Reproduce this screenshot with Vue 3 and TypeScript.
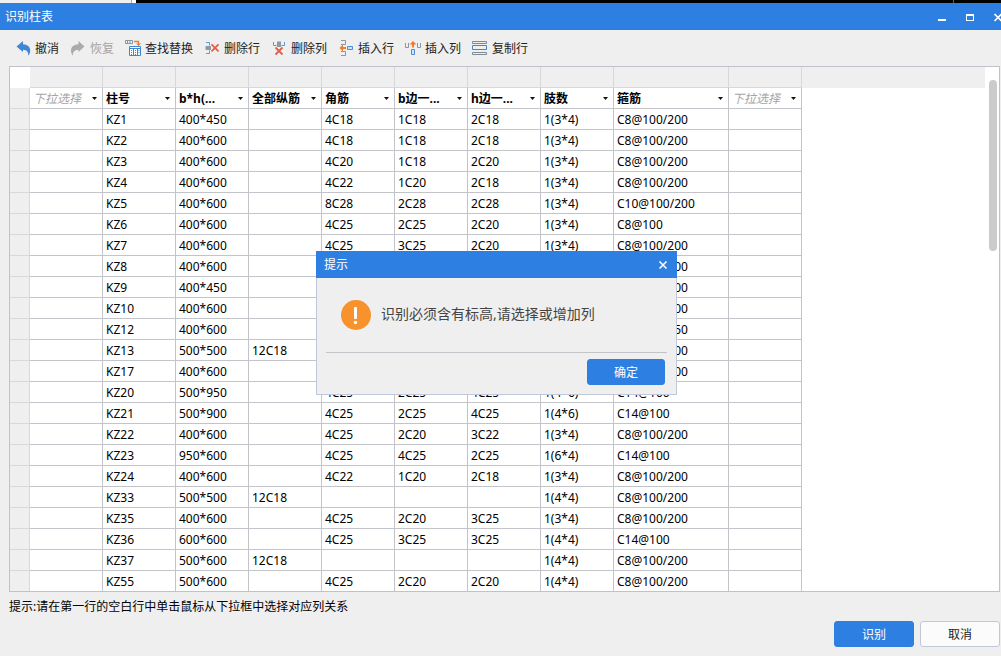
<script setup lang="ts">
import { reactive, ref } from 'vue'

interface Column {
  label: string
  width: number
  empty?: boolean
}

const columns: Column[] = [
  { label: '下拉选择', width: 73, empty: true },
  { label: '柱号', width: 73 },
  { label: 'b*h(...', width: 73 },
  { label: '全部纵筋', width: 73 },
  { label: '角筋', width: 73 },
  { label: 'b边一...', width: 73 },
  { label: 'h边一...', width: 73 },
  { label: '肢数', width: 73 },
  { label: '箍筋', width: 115 },
  { label: '下拉选择', width: 73, empty: true },
]
const mapping = reactive(columns.map((c) => c.label))

// Columns: number, section, all bars, corner bars, b side, h side, legs, stirrups
const rows: string[][] = [
  ['KZ1', '400*450', '', '4C18', '1C18', '2C18', '1(3*4)', 'C8@100/200'],
  ['KZ2', '400*600', '', '4C18', '1C18', '2C18', '1(3*4)', 'C8@100/200'],
  ['KZ3', '400*600', '', '4C20', '1C18', '2C20', '1(3*4)', 'C8@100/200'],
  ['KZ4', '400*600', '', '4C22', '1C20', '2C18', '1(3*4)', 'C8@100/200'],
  ['KZ5', '400*600', '', '8C28', '2C28', '2C28', '1(3*4)', 'C10@100/200'],
  ['KZ6', '400*600', '', '4C25', '2C25', '2C20', '1(3*4)', 'C8@100'],
  ['KZ7', '400*600', '', '4C25', '3C25', '2C20', '1(3*4)', 'C8@100/200'],
  ['KZ8', '400*600', '', '4C25', '2C25', '2C20', '1(3*4)', 'C8@100/200'],
  ['KZ9', '400*450', '', '4C18', '1C18', '2C18', '1(3*4)', 'C8@100/200'],
  ['KZ10', '400*600', '', '4C20', '1C18', '2C20', '1(3*4)', 'C8@100/200'],
  ['KZ12', '400*600', '', '4C22', '1C20', '2C18', '1(3*4)', 'C8@100/150'],
  ['KZ13', '500*500', '12C18', '', '', '', '1(4*4)', 'C8@100/200'],
  ['KZ17', '400*600', '', '4C25', '2C20', '2C20', '1(3*4)', 'C8@100/200'],
  ['KZ20', '500*950', '', '4C25', '2C25', '4C25', '1(4*6)', 'C14@100'],
  ['KZ21', '500*900', '', '4C25', '2C25', '4C25', '1(4*6)', 'C14@100'],
  ['KZ22', '400*600', '', '4C25', '2C20', '3C22', '1(3*4)', 'C8@100/200'],
  ['KZ23', '950*600', '', '4C25', '4C25', '2C25', '1(6*4)', 'C14@100'],
  ['KZ24', '400*600', '', '4C22', '1C20', '2C18', '1(3*4)', 'C8@100/200'],
  ['KZ33', '500*500', '12C18', '', '', '', '1(4*4)', 'C8@100/200'],
  ['KZ35', '400*600', '', '4C25', '2C20', '3C25', '1(3*4)', 'C8@100/200'],
  ['KZ36', '600*600', '', '4C25', '3C25', '3C25', '1(4*4)', 'C14@100'],
  ['KZ37', '500*600', '12C18', '', '', '', '1(4*4)', 'C8@100/200'],
  ['KZ55', '500*600', '', '4C25', '2C20', '2C20', '1(4*4)', 'C8@100/200'],
]

const dialogOpen = ref(true)
</script>

<template>
  <div class="window">
    <div class="backdrop"><span class="tab"></span><span class="dark"></span><span class="mark"></span><span class="dark-end"></span></div>
    <header class="titlebar">
      <span>识别柱表</span>
      <div class="controls">
        <button type="button" aria-label="最小化">
          <svg width="12" height="12"><path d="M2 8h8v2H2z" fill="#fff" /></svg>
        </button>
        <button type="button" aria-label="最大化">
          <svg width="12" height="12"><path fill-rule="evenodd" d="M2 3h8v7H2zM3 5v4h6V5z" fill="#fff" /></svg>
        </button>
        <button type="button" aria-label="关闭">
          <svg width="12" height="12"><path d="M2.5 3l7 7M9.5 3l-7 7" stroke="#fff" stroke-width="1.7" /></svg>
        </button>
      </div>
    </header>

    <nav class="toolbar">
      <button type="button">
        <svg class="icon" viewBox="0 0 18 18"><path fill="#3f87d3" d="M1.5 7.500 8 2v3.300c4.500.2 7.200 2.700 7.200 6.200 0 2-.6 3.700-1.900 5.200.2-3.500-1.300-5.700-5.300-5.900V13z" /></svg>
        <span>撤消</span>
      </button>
      <button type="button" disabled>
        <svg class="icon" viewBox="0 0 18 18"><path fill="#ababab" d="M14.500 7.500 8.500 2v3.300C3.800 5.500 1 8 1 11.500c0 2 .6 3.700 1.900 5.200-.2-3.500 1.500-5.700 5.600-5.900V13z" /></svg>
        <span>恢复</span>
      </button>
      <button type="button">
        <svg class="icon" viewBox="0 0 18 18" fill="none">
          <path stroke="#8995a1" d="M.5 1.500h7v3h-7zM2.500 1.500v3M5 1.500v3" />
          <path stroke="#ee7b2e" stroke-width="1.300" d="M9 2.500h4.500V5" />
          <path fill="#ee7b2e" d="M11 4.500h5L13.500 7z" />
          <path fill="#fff" stroke="#3f87d3" d="M4.500 7.500h11v9h-11z" />
          <path stroke="#3f87d3" d="M4 9.500h12M8.500 9v8M12.500 9v8M6 11.500h1M6 13.500h1M6 15.500h1M10 11.500h1M10 13.500h1M10 15.500h1M13.500 11.500h1M13.500 13.500h1" />
        </svg>
        <span>查找替换</span>
      </button>
      <button type="button">
        <svg class="icon" viewBox="0 0 18 18" fill="none">
          <path stroke="#5b9ad6" d="M2 3.500h3.500v3M2 14.500h3.500v-3" />
          <path fill="#8e9aa3" d="M1.500 7H7v4H1.500z" />
          <path stroke="#df6048" stroke-width="1.800" d="M7.500 5.300l7 7M14.500 5.300l-7 7" />
        </svg>
        <span>删除行</span>
      </button>
      <button type="button">
        <svg class="icon" viewBox="0 0 18 18" fill="none">
          <path stroke="#5b9ad6" d="M2.500 3v3.500h3M13.500 3v3.500h-3" />
          <path fill="#8e9aa3" d="M6 2.500h4V8H6z" />
          <path stroke="#df6048" stroke-width="1.800" d="M4.500 8.500l7 7M11.500 8.500l-7 7" />
        </svg>
        <span>删除列</span>
      </button>
      <button type="button">
        <svg class="icon" viewBox="0 0 18 18" fill="none">
          <path stroke="#8995a1" d="M3 1.500h4.500v4H3M3 12.500h4.500v4H3" />
          <path fill="#ee7b2e" d="M1.500 9 5 5.500V8h3v2H5v2.500z" />
          <path fill="#cfe2f7" stroke="#4a8fdc" d="M9.500 7.500h5v3h-5z" />
        </svg>
        <span>插入行</span>
      </button>
      <button type="button">
        <svg class="icon" viewBox="0 0 18 18" fill="none">
          <path stroke="#8995a1" d="M.5 4v4.500h3V4M12.500 4v4.500h3V4" />
          <path fill="#ee7b2e" d="M8 2l3.500 3.500H9v3H7v-3H4.500z" />
          <path fill="#cfe2f7" stroke="#4a8fdc" d="M6.500 10.500h3v5h-3z" />
        </svg>
        <span>插入列</span>
      </button>
      <button type="button">
        <svg class="icon" viewBox="0 0 18 18" fill="none">
          <path stroke="#7e8a94" d="M.5 2.500h14v2H.5zM.5 13.500h14v2H.5z" />
          <path stroke="#3f87d3" d="M.5 6.500h14v4H.5z" />
        </svg>
        <span>复制行</span>
      </button>
    </nav>

    <main class="content">
      <div class="grid">
        <table>
          <colgroup>
            <col class="gutter-col" />
            <col v-for="(c, i) in columns" :key="i" :style="{ width: c.width + 'px' }" />
            <col />
          </colgroup>
          <thead>
            <tr class="band">
              <td class="corner"></td>
              <td v-for="(c, i) in columns" :key="i"></td>
              <td class="filler"></td>
            </tr>
            <tr class="heads">
              <td class="gutter"></td>
              <th v-for="(c, i) in columns" :key="i" scope="col">
                <div class="pick">
                  <select v-model="mapping[i]" :class="{ empty: c.empty }" :aria-label="'第' + (i + 1) + '列'">
                    <option :value="c.label">{{ c.label }}</option>
                  </select>
                  <svg width="5" height="3"><path d="M0 0h5L2.500 3z" fill="#111" /></svg>
                </div>
              </th>
              <td class="filler"></td>
            </tr>
          </thead>
          <tbody>
            <tr v-for="row in rows" :key="row[0]">
              <td class="gutter"></td>
              <td></td>
              <td v-for="(cell, i) in row" :key="i">{{ cell }}</td>
              <td></td>
              <td class="filler"></td>
            </tr>
          </tbody>
        </table>
        <div class="scroll"><div class="thumb"></div></div>
      </div>
      <p class="tip">提示:请在第一行的空白行中单击鼠标从下拉框中选择对应列关系</p>
      <footer class="actions">
        <button type="button" class="btn primary">识别</button>
        <button type="button" class="btn">取消</button>
      </footer>
    </main>

    <section v-if="dialogOpen" class="dialog" role="dialog" aria-labelledby="dialog-title">
      <header class="dialog-title">
        <span id="dialog-title">提示</span>
        <button type="button" aria-label="关闭" @click="dialogOpen = false">
          <svg width="12" height="12"><path d="M2.500 2.500l7 7M9.500 2.500l-7 7" stroke="#fff" stroke-width="1.600" /></svg>
        </button>
      </header>
      <div class="dialog-body">
        <div class="message">
          <svg width="30" height="30" viewBox="0 0 30 30">
            <circle cx="15" cy="15" r="15" fill="#f8922d" />
            <rect x="13" y="7" width="3" height="12" rx="1" fill="#fff" />
            <circle cx="14.500" cy="22.500" r="1.700" fill="#fff" />
          </svg>
          <span>识别必须含有标高,请选择或增加列</span>
        </div>
        <div class="dialog-actions">
          <button type="button" class="btn primary" @click="dialogOpen = false">确定</button>
        </div>
      </div>
    </section>
  </div>
</template>

<style>
body {
  margin: 0;
  background: #efefef;
}
</style>

<style scoped>
.window {
  position: relative;
  min-height: 100vh;
  overflow: hidden;
  background: #efefef;
  color: #000;
  font: 12px/18px "Noto Sans", "Noto Sans CJK SC", sans-serif;
}
button {
  padding: 0;
  border: 0;
  background: none;
  color: inherit;
  font: inherit;
}
svg {
  display: block;
  flex: none;
}
.backdrop {
  display: flex;
  height: 3px;
  background: #fff;
}
.tab {
  width: 131px;
  margin-right: 4px;
  border-right: 1px solid #aaa;
  background: #efefef;
}
.dark {
  flex: 1;
  background: #000;
}
.mark {
  width: 1px;
  background: #2b6cb8;
}
.dark-end {
  width: 47px;
  background: #000;
}
.titlebar {
  display: flex;
  align-items: center;
  justify-content: space-between;
  height: 27px;
  padding-left: 5px;
  background: #2d7fe1;
  color: #fff;
}
.controls {
  display: flex;
  margin-right: -11px;
}
.controls button {
  display: grid;
  place-items: center;
  width: 28px;
  height: 27px;
}
.toolbar {
  display: flex;
  align-items: center;
  gap: 11px;
  height: 36px;
  padding-left: 15px;
}
.toolbar button {
  display: flex;
  align-items: center;
  gap: 2px;
  color: #222;
  line-height: 16px;
  white-space: nowrap;
}
.toolbar span {
  padding-top: 2px;
}
.toolbar button:disabled {
  color: #a5a5a5;
}
.icon {
  width: 18px;
  height: 18px;
}
.content {
  padding: 0 1px 0 9px;
}
.grid {
  display: flex;
  border: 1px solid #c1c2c9;
  background: #fff;
}
table {
  flex: 1;
  min-width: 0;
  table-layout: fixed;
  border-spacing: 0;
}
.gutter-col {
  width: 20px;
}
td,
th {
  box-sizing: border-box;
  height: 21px;
  padding: 2px 0 0 3px;
  border-right: 1px solid #c3c4c9;
  border-bottom: 1px solid #c3c4c9;
  line-height: 18px;
  text-align: left;
  white-space: nowrap;
}
th {
  padding-top: 0;
}
.band td {
  border-color: #d8d8da;
  background: #efefef;
}
.band .corner {
  border-color: #fff;
  background: #fff;
}
.gutter {
  border-color: #d8d8da;
  background: #efefef;
}
.filler,
.band .filler {
  border: 0;
}
tbody tr:last-child td {
  height: 20px;
  border-bottom: 0;
}
.pick {
  display: flex;
  align-items: center;
  padding-right: 5px;
}
select {
  flex: 1;
  box-sizing: border-box;
  min-width: 0;
  height: 20px;
  padding: 2px 0 0;
  border: 0;
  appearance: none;
  background: transparent;
  color: #000;
  font: inherit;
  font-weight: 700;
}
select.empty {
  color: #a5a5a5;
  font-style: italic;
  font-weight: 400;
}
.scroll {
  box-sizing: border-box;
  width: 14px;
  padding: 13px 2px 0 4px;
}
.thumb {
  height: 171px;
  border-radius: 4px;
  background: #cbcbcb;
}
.tip {
  margin: 0;
  padding: 6px 0 5px;
}
.actions {
  display: flex;
  justify-content: flex-end;
  gap: 6px;
}
.btn {
  box-sizing: border-box;
  width: 80px;
  height: 26px;
  padding-top: 2px;
  border: 1px solid #c0c8da;
  border-radius: 3px;
  background: #fbfbfb;
  color: #222;
}
.btn.primary {
  border-color: #2d7fe1;
  background: #2d7fe1;
  color: #fff;
}
.dialog {
  position: absolute;
  top: 251px;
  left: 316px;
  width: 361px;
  background: #efefef;
}
.dialog-title {
  display: flex;
  align-items: center;
  justify-content: space-between;
  height: 27px;
  padding: 0 8px;
  background: #2d7fe1;
  color: #fff;
}
.dialog-body {
  padding: 0 9px 9px;
  border: 1px solid #c0c8da;
  border-top: 0;
}
.message {
  display: flex;
  align-items: center;
  gap: 10px;
  height: 74px;
  padding-left: 15px;
  border-bottom: 1px solid #c3c4c9;
  color: #444;
  font-size: 14px;
}
.message span {
  padding-bottom: 2px;
}
.dialog-actions {
  display: flex;
  justify-content: flex-end;
  padding: 6px 2px 0 0;
}
.dialog .btn {
  width: 78px;
}
</style>
